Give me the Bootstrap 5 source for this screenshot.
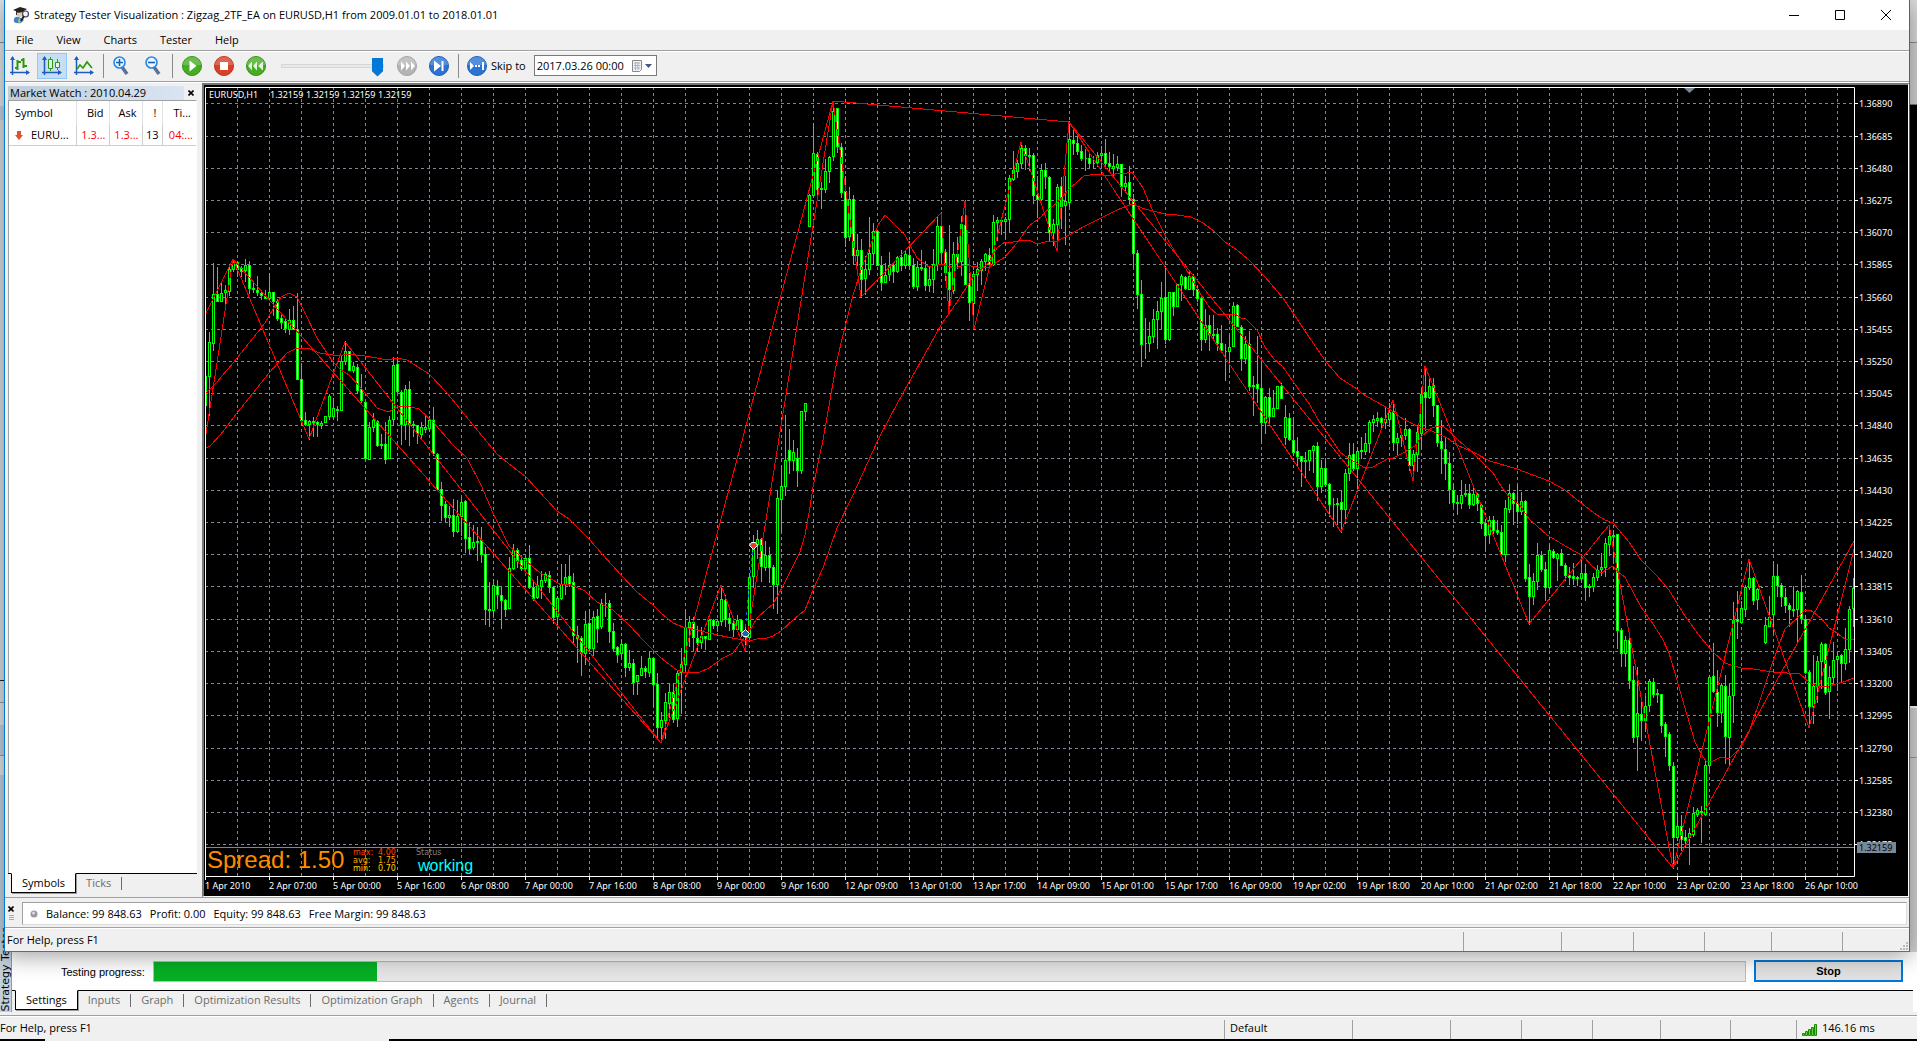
<!DOCTYPE html>
<html lang="en">
<head>
<meta charset="utf-8">
<meta name="viewport" content="width=device-width, initial-scale=1">
<title>Strategy Tester Visualization</title>
<link href="https://cdn.jsdelivr.net/npm/bootstrap@5.3.0/dist/css/bootstrap.min.css" rel="stylesheet">
<script src="https://cdn.jsdelivr.net/npm/bootstrap@5.3.0/dist/js/bootstrap.bundle.min.js"></script>
<style>
:root{--face:#f0f0f0;--edge:#a0a0a0;--accent:#0078d7;--slate:#778899}
body{font-family:"Open Sans","Noto Sans",sans-serif;font-size:11px;line-height:16px;color:#000;background:var(--face);height:100vh;overflow:hidden}
button,input{font:inherit;color:inherit}
.ui-btn{border:0;background:none;padding:0;display:flex;align-items:center;justify-content:center}
/* desktop row: slivers of the parent window on both sides */
.desk,.fill-col{min-height:0}
.side-l{width:4px;background:linear-gradient(#e3e3e3 0 42px,#8c8c8c 42px 43px,#e3e3e3 43px 106px,#c3d0dd 106px 120px,#dcdcdc 120px 680px,#222 680px 681px,#dcdcdc 681px 702px,#999 702px 703px,#e3e3e3 703px 725px,#c3d0dd 725px 755px,#999 755px 756px,#e3e3e3 756px 775px,#c3d0dd 775px)}
.side-r{width:7px;background:linear-gradient(#dcdcdc 0 42px,#8c8c8c 42px 43px,#d2d2d2 43px 104px,#777 104px 105px,#000 105px 706px,#fff 706px 708px,#d2d2d2 708px 757px,#999 757px 758px,#d2d2d2 758px)}
.win{min-width:0;background:var(--face);border-left:1px solid var(--accent);border-right:1px solid var(--accent);border-bottom:1px solid #1a7fd0;box-shadow:0 4px 22px rgba(0,0,0,.38);z-index:2}
.title-bar{height:30px;background:#fff;padding-left:7px}
.cap-btn{width:46px;height:29px}
.menu-bar{height:22px;border-bottom:1px solid #fff;box-shadow:inset 0 -1px var(--edge);padding:0 5px 2px 4px}
.menu-bar a{color:#000;text-decoration:none;padding:0 11px 0 7px;margin-right:5px}
.tool-bar{height:31px;border-bottom:1px solid #fff;box-shadow:inset 0 -1px var(--edge);padding-bottom:3px}
.tool{width:30px;height:26px;margin-right:2px}
.tool.on{background:#c5def4;border:1px solid #90c8f6}
.vsep{width:1px;height:24px;background:#8a8a8a}
.vsep.tight{margin:0 2px 0 4px}
.speed{appearance:none;width:103px;height:20px;background:none;margin:0 8px 0 10px}
.speed::-webkit-slider-runnable-track{height:4px;background:#e7eaea;border:1px solid #d6d6d6}
.speed::-webkit-slider-thumb{appearance:none;width:11px;height:19px;margin-top:-7px;background:var(--accent);clip-path:polygon(0 0,100% 0,100% 72%,50% 100%,0 72%)}
.date-box{width:123px;height:21px;background:#fff;border:1px solid #7a7a7a}
.date-box input{width:93px;border:0;padding:0 0 0 2px;outline:0;background:none}
.watch{width:197px;padding:3px 5px 2px 3px}
.watch-title{height:14px;padding-right:3px}
.watch-title span{background:linear-gradient(90deg,#bfcddb,#d9e5f3);width:176px;height:14px;line-height:14px;padding-left:2px}
.watch-body{background:#fff;border-left:1px solid var(--edge);border-top:1px solid var(--edge);border-right:1px solid #fff}
.quotes{width:100%;table-layout:fixed;border-collapse:collapse}
.quotes th{font-weight:400;height:24px;border-right:1px solid #e2e2e2;padding:0 5px 0 6px}
.quotes td{height:20px;border-right:1px solid #cfcfcf;border-bottom:1px solid #cfcfcf;padding:0 3px 0 2px;white-space:nowrap}
.quotes .down{color:#f00}
.quotes tr>:last-child{border-right:0}
.tab-strip{border-top:1px solid #000;height:22px;background:var(--face);color:#6d6d6d;padding-left:3px}
.tab-strip button{height:19px;padding:0 10px;color:#6d6d6d;margin-top:-1px}
.tab-strip .vbar{width:1px;height:13px;background:#6d6d6d;margin-top:3px}
.tab-strip .current{background:#fff;color:#000;border:1px solid #000;border-top:1px solid #fff;height:20px;box-shadow:1px 1px #999}
.chart-frame{min-width:0;background:#000;border-left:2px solid #777;border-top:2px solid #777;border-right:1px solid #fff;border-bottom:1px solid #fff}
.chart-frame svg{display:block}
.axis{font:9px "Noto Sans",sans-serif;fill:#fff}
.account{height:30px;border-top:1px solid var(--edge);padding:4px 2px 2px 3px}
.account-box{background:#fff;border:1px solid #dcdcdc;border-top:1px solid var(--edge);border-left:1px solid var(--edge);padding-left:7px}
.status-a{height:24px;border-top:1px solid var(--edge);box-shadow:inset 0 1px #fff;padding:4px 0 0 2px}
.status-b{height:24px;border-top:1px solid var(--edge);box-shadow:inset 0 1px #fff;padding-top:4px;margin-top:3px}
.cell{border-left:1px solid var(--edge);height:19px;padding-left:5px}
.tester{background:#fff;z-index:1}
.tester-name{width:12px;background:#c3d0dd;border-right:1px solid #999;line-height:12px}
.tester-name span{writing-mode:vertical-rl;transform:rotate(180deg);white-space:nowrap;font-family:"DejaVu Sans",sans-serif}
.test-row{height:38px;padding:8px 14px 0 49px;font-family:"Liberation Sans",sans-serif}
.test-row label{margin-right:8px}
.test-bar{height:21px;border-radius:0;background:#e6e6e6;border:1px solid #bcbcbc;margin-top:1px}
.test-bar .progress-bar{background:#06b025}
.stop-btn{width:149px;height:22px;border:2px solid var(--accent);background:#e1e1e1;font-weight:700;margin-left:8px;line-height:16px}
.tester-tabs{margin-right:4px}
.task-edge{height:2px;background:linear-gradient(90deg,#000 45px,#f0f0f0 45px 389px,#000 389px)}
</style>
</head>
<body class="d-flex flex-column">
<div class="desk d-flex flex-grow-1">
  <div class="side-l flex-shrink-0"></div>
  <main class="win flex-grow-1 d-flex flex-column">
    <header class="title-bar d-flex align-items-center">
      <svg width="18" height="18" viewBox="0 0 18 18"><path d="M1 4 8 1l7 2-6 4z" fill="#222"/><path d="M4 6v3l4 1 4-2V5L9 7z" fill="#333"/><circle cx="8" cy="8" r="3" fill="#f0c9a0"/><path d="M4 6q4 2 8-1l-1-1H4z" fill="#222"/><path d="M2 16q-1-6 5-5l5 3-3 3q-4 1-7-1z" fill="#2f86d8"/><path d="M7 11l2 5-3 1z" fill="#f2b531"/><circle cx="13.500" cy="8" r="3" fill="#eaf5ff" stroke="#445" stroke-width="1.200"/><path d="M12 10 9 15" stroke="#222" stroke-width="2"/></svg>
      <span class="ms-1 flex-grow-1">Strategy Tester Visualization : Zigzag_2TF_EA on EURUSD,H1 from 2009.01.01 to 2018.01.01</span>
      <button class="ui-btn cap-btn" aria-label="Minimize"><svg width="10" height="10"><path d="M0 5.500h10" stroke="#000"/></svg></button>
      <button class="ui-btn cap-btn" aria-label="Maximize"><svg width="10" height="10"><path d="M.5.5h9v9h-9z" fill="none" stroke="#000"/></svg></button>
      <button class="ui-btn cap-btn" aria-label="Close"><svg width="10" height="10"><path d="M0 0l10 10M10 0 0 10" stroke="#000"/></svg></button>
    </header>
    <nav class="menu-bar d-flex align-items-center">
      <a href="#">File</a><a href="#">View</a><a href="#">Charts</a><a href="#">Tester</a><a href="#">Help</a>
    </nav>
    <div class="tool-bar d-flex align-items-center">
      <button class="ui-btn tool" aria-label="Bar chart"><svg width="20" height="20"><path d="M2.500 1v18M0 16.500h19" stroke="#1c5bc0" stroke-width="1.500" fill="none"/><path d="M2.500 0 0 4h5zM20 16.500l-4-2.500v5z" fill="#1c5bc0"/><path d="M7.500 4v10M5 12h2M8 6h3M13.500 2v10M11 4h2M14 10h3" stroke="#2c9a10" stroke-width="2"/></svg></button>
      <button class="ui-btn tool on" aria-label="Candlesticks"><svg width="20" height="20"><path d="M2.500 1v18M0 16.500h19" stroke="#1c5bc0" stroke-width="1.500" fill="none"/><path d="M2.500 0 0 4h5zM20 16.500l-4-2.500v5z" fill="#1c5bc0"/><path d="M8.500 1v14M15.500 3v11" stroke="#2c9a10"/><path d="M6.500 3.500h4v9h-4zM13.500 6.500h4v5h-4z" fill="#e8f8e0" stroke="#2c9a10"/></svg></button>
      <button class="ui-btn tool me-0" aria-label="Line chart"><svg width="20" height="20"><path d="M2.500 1v18M0 16.500h19" stroke="#1c5bc0" stroke-width="1.500" fill="none"/><path d="M2.500 0 0 4h5zM20 16.500l-4-2.500v5z" fill="#1c5bc0"/><path d="M3 13l3-4 3 3 4-6 5 6" stroke="#2c9a10" stroke-width="1.700" fill="none"/></svg></button>
      <i class="vsep tight"></i>
      <button class="ui-btn tool" aria-label="Zoom in"><svg width="18" height="20"><path d="m10 11 5 7" stroke="#5b7291" stroke-width="3.500"/><circle cx="7.500" cy="6.500" r="5.500" fill="#eaf6ff" stroke="#2b86e0" stroke-width="1.600"/><path d="M4 6.500h7M7.500 3v7" stroke="#1560b8" stroke-width="1.600"/></svg></button>
      <button class="ui-btn tool me-0" aria-label="Zoom out"><svg width="18" height="20"><path d="m10 11 5 7" stroke="#5b7291" stroke-width="3.500"/><circle cx="7.500" cy="6.500" r="5.500" fill="#eaf6ff" stroke="#2b86e0" stroke-width="1.600"/><path d="M4 6.500h7" stroke="#1560b8" stroke-width="1.600"/></svg></button>
      <i class="vsep mx-1"></i>
      <button class="ui-btn tool" aria-label="Play"><svg width="20" height="20"><circle cx="10" cy="10" r="9.500" fill="#46ad22" stroke="#37921a"/><path d="M1 9a9 8 0 0 1 18 0z" fill="#fff" opacity=".2"/><path d="m7.500 4.500 7 5.500-7 5.500z" fill="#fff"/></svg></button>
      <button class="ui-btn tool" aria-label="Stop"><svg width="20" height="20"><circle cx="10" cy="10" r="9.500" fill="#d9402a" stroke="#bb3320"/><path d="M1 9a9 8 0 0 1 18 0z" fill="#fff" opacity=".2"/><path d="M6 6h8v8H6z" fill="#fff"/></svg></button>
      <button class="ui-btn tool me-0" aria-label="Slower"><svg width="20" height="20"><circle cx="10" cy="10" r="9.500" fill="#46ad22" stroke="#37921a"/><path d="M1 9a9 8 0 0 1 18 0z" fill="#fff" opacity=".2"/><path d="M6 5.500v9L2 10zM11 5.500v9L7 10zM17 5.500v9L12 10z" fill="#fff" opacity=".85"/></svg></button>
      <input class="speed" type="range" min="0" max="10" value="10" aria-label="Speed">
      <button class="ui-btn tool" aria-label="Faster"><svg width="20" height="20"><circle cx="10" cy="10" r="9.500" fill="#b4b4b4" stroke="#a2a2a2"/><path d="M1 9a9 8 0 0 1 18 0z" fill="#fff" opacity=".2"/><path d="M4 5.500v9L8 10zM9 5.500v9l4-4.500zM14 5.500v9l4-4.500z" fill="#fff"/></svg></button>
      <button class="ui-btn tool me-1" aria-label="Step"><svg width="20" height="20"><circle cx="10" cy="10" r="9.500" fill="#2a72d4" stroke="#1f5fb8"/><path d="M1 9a9 8 0 0 1 18 0z" fill="#fff" opacity=".2"/><path d="m5 4.500 7 5.500-7 5.500zM12.500 5h2v10h-2z" fill="#fff"/></svg></button>
      <i class="vsep"></i>
      <button class="ui-btn ms-2" aria-label="Skip"><svg width="20" height="20"><circle cx="10" cy="10" r="9.500" fill="#2a72d4" stroke="#1f5fb8"/><path d="M1 9a9 8 0 0 1 18 0z" fill="#fff" opacity=".2"/><path d="M3 6v8l4-4zM8 9h2v2H8zM11 9h2v2h-2zM15 6h2v8h-2z" fill="#fff"/></svg></button>
      <label class="ms-1 me-2" for="skipDate">Skip to</label>
      <div class="date-box d-flex align-items-center">
        <input id="skipDate" type="text" value="2017.03.26 00:00">
        <button class="ui-btn" aria-label="Pick date"><svg width="24" height="14"><path d="M4.500 1.500h9v9l-2 2h-7z" fill="#eef2f6" stroke="#888"/><path d="M6 4h6M6 6.500h6M6 9h6M7.500 3v8M10 3v8" stroke="#a9b4c4"/><path d="M17 5h7l-3.500 4z" fill="#3c5a85"/></svg></button>
      </div>
    </div>
    <div class="fill-col d-flex flex-grow-1">
      <aside class="watch flex-shrink-0 d-flex flex-column">
        <div class="watch-title d-flex align-items-center justify-content-between">
          <span>Market Watch : 2010.04.29</span>
          <button class="ui-btn" aria-label="Close panel"><svg width="6" height="6"><path d="m.5.5 5 5m0-5-5 5" stroke="#000" stroke-width="1.600"/></svg></button>
        </div>
        <div class="watch-body flex-grow-1">
          <table class="quotes">
            <colgroup><col style="width:67px"><col style="width:33px"><col style="width:33px"><col style="width:20px"><col></colgroup>
            <thead><tr><th>Symbol</th><th class="text-end">Bid</th><th class="text-end">Ask</th><th class="text-end">!</th><th class="text-end">Ti...</th></tr></thead>
            <tbody><tr><td><svg class="ms-1 me-2" width="8" height="9"><path d="M2 0h4v4h2L4 9 0 4h2z" fill="#e0522c"/></svg>EURU...</td><td class="down text-end">1.3...</td><td class="down text-end">1.3...</td><td class="text-end">13</td><td class="down text-end">04:...</td></tr></tbody>
          </table>
        </div>
        <div class="tab-strip d-flex">
          <button class="ui-btn current">Symbols</button><button class="ui-btn">Ticks</button><i class="vbar"></i>
        </div>
      </aside>
      <section class="chart-frame flex-grow-1" id="frame"></section>
    </div>
    <div class="account d-flex">
      <div class="d-flex flex-column align-items-center pt-1 me-2">
        <svg width="6" height="14"><path d="m.5.5 5 5m0-5-5 5" stroke="#000" stroke-width="1.600"/><path d="M1 9.500h5M1 11.500h5M1 13.500h5" stroke="#aaa"/></svg>
      </div>
      <div class="account-box flex-grow-1 d-flex align-items-center">
        <svg class="me-2" width="8" height="8"><circle cx="4" cy="4" r="3.500" fill="#9a9a9a"/><circle cx="3.500" cy="3" r="1.500" fill="#ddd"/></svg>
        <span class="me-2">Balance: 99 848.63</span><span class="me-2">Profit: 0.00</span><span class="me-2">Equity: 99 848.63</span><span>Free Margin: 99 848.63</span>
      </div>
    </div>
    <footer class="status-a d-flex">
      <span class="flex-grow-1">For Help, press F1</span>
      <span class="cell" style="width:98px"></span><span class="cell" style="width:72px"></span><span class="cell" style="width:71px"></span><span class="cell" style="width:67px"></span><span class="cell" style="width:71px"></span>
      <span class="cell d-flex align-items-end justify-content-end" style="width:67px"><svg width="9" height="9"><path d="M6 0h2v2H6zM3 3h2v2H3zM6 3h2v2H6zM0 6h2v2H0zM3 6h2v2H3zM6 6h2v2H6z" fill="#bbb"/></svg></span>
    </footer>
  </main>
  <div class="side-r flex-shrink-0"></div>
</div>
<section class="tester d-flex">
  <div class="tester-name flex-shrink-0 position-relative"><span class="position-absolute bottom-0 start-0">Strategy Tester</span></div>
  <div class="flex-grow-1">
    <div class="test-row d-flex">
      <label class="pt-1" for="stopBtn">Testing progress:</label>
      <div class="progress test-bar flex-grow-1" role="progressbar" aria-label="Testing progress"><div class="progress-bar" style="width:14%"></div></div>
      <button class="stop-btn" id="stopBtn">Stop</button>
    </div>
    <div class="tab-strip tester-tabs d-flex">
      <button class="ui-btn current">Settings</button><button class="ui-btn">Inputs</button><i class="vbar"></i><button class="ui-btn">Graph</button><i class="vbar"></i><button class="ui-btn">Optimization Results</button><i class="vbar"></i><button class="ui-btn">Optimization Graph</button><i class="vbar"></i><button class="ui-btn">Agents</button><i class="vbar"></i><button class="ui-btn">Journal</button><i class="vbar"></i>
    </div>
  </div>
</section>
<footer class="status-b d-flex">
  <span class="flex-grow-1">For Help, press F1</span>
  <span class="cell" style="width:128px">Default</span><span class="cell" style="width:98px"></span><span class="cell" style="width:71px"></span><span class="cell" style="width:71px"></span><span class="cell" style="width:68px"></span><span class="cell" style="width:70px"></span><span class="cell" style="width:66px"></span>
  <span class="cell d-flex" style="width:121px"><svg class="mt-1 me-1" width="16" height="12"><path d="M.5 9.500h2v2h-2zM3.500 7.500h2v4h-2zM6.500 5.500h2v6h-2zM9.500 3.500h2v8h-2zM12.500.5h2v11h-2z" fill="#5fd83a" stroke="#1c8a06"/></svg>146.16 ms</span>
</footer>
<div class="task-edge"></div>
<script>
// Candles in runs: first bar x, base y, then top,open,close,bottom in thirds of a pixel.
const runs = [
[205,230,`438,438,526,526 306,440,337,556 100,340,193,362 112,193,214,214 154,214,190,214 166,187,181,220 102,184,118,196 87,118,97,124 95,97,117,140 108,116,124,140 88,122,106,155 94,106,176,190 155,175,178,188 138,181,187,195 185,190,196,208 180,199,206,206 130,205,187,205 186,187,214,257 208,214,265,272 250,265,277,296 265,274,296,308 237,297,271,312 228,271,297,298 190,298,448,448 402,448,571,586 546,571,583,586 570,583,574,628 562,574,577,618 574,577,583,620 575,586,580,596 558,577,560,577 492,559,499,568 504,559,535,568 528,541,538,570 378,541,394,541 334,394,364,402 364,364,421,421 396,421,409,428 402,412,481,490 432,478,511,517 516,517,685,688 578,688,592,688 549,592,571,604 570,574,646,650 612,643,646,654 576,643,688,700 558,685,571,685 382,568,406,586 382,403,484,486 480,487,583,644 466,583,478,627 454,478,583,645 574,583,586,620 586,586,611,640 576,614,592,624 558,598,592,606 560,595,571,604 532,571,670,676 670,674,778,782 757,778,826,872 814,823,862,876 828,862,856,888 808,856,905,920 812,905,859,908 802,859,817,915 812,814,925,968 880,922,956,974 885,953,937,958 892,934,937,990 891,931,973,998 952,973,1138,1182 1057,1138,1141,1190 1048,1141,1066,1156 1052,1069,1093,1136 1072,1096,1111,1196 1108,1111,1138,1158 982,1135,1015,1135 942,1015,961,1018 956,961,991,1012 975,991,1015,1022 980,1015,985,1020 946,985,1072,1074 1052,1072,1105,1110 1040,1102,1066,1105 1024,1070,1051,1106 1028,1050,1033,1058 1024,1036,1072,1088 1070,1072,1162,1180 1098,1159,1105,1184 1002,1105,1063,1108 1003,1063,1042,1092 975,1039,1062,1070`],
[573,480,`280,307,466,490 438,466,475,548 468,475,520,585 393,520,433,552 388,430,505,520 394,505,412,526 388,409,445,486 357,439,370,446 339,370,370,408 360,370,454,486 430,454,505,514 500,502,523,548 480,520,493,532 490,493,562,588 510,562,550,570 538,550,607,644 586,604,586,642 528,586,565,587 560,565,574,592 514,577,535,590 532,535,613,680 580,613,742,774 697,742,721,788 640,721,667,776 610,670,637,712 610,637,718,726 574,715,580,740 504,577,553,700 390,553,442,578 408,442,427,498 412,427,472,510 438,475,487,514 442,487,469,506 468,469,475,507 418,478,421,478 418,421,436,444 418,436,424,454 315,424,358,436 345,361,418,438 400,415,430,452 418,430,448,468 405,448,421,450 418,421,454,470 432,454,472,512 280,472,292,474 165,289,196,322 150,193,178,234 176,178,260,304 184,262,226,272 202,226,262,306 256,262,313,384 30,313,55,399 -40,58,19,155 -195,19,-60,46 -153,-90,-60,-20 -120,-60,-84,-30 -96,-66,-30,20 -206,-30,-206,-20`],
[805,80,`970,994,970,1020 342,439,346,439 129,345,220,346 218,223,328,350 308,325,328,384 238,328,274,336 228,274,232,306 70,229,94,240 84,85,200,218 190,202,338,352 288,334,472,500 322,469,358,480 345,358,526,550 462,526,511,556 478,511,598,652 528,595,568,642 411,568,520,584 430,520,454,552 450,454,556,556 528,556,607,630 550,607,586,607 516,583,556,600 548,556,574,606 528,574,532,576 512,532,556,572 514,556,523,566 484,526,556,568 535,556,619,624 545,619,562,630 510,562,565,572 545,565,616,630 560,616,598,635 507,598,553,638 408,553,439,572 398,439,517,544 508,517,577,600 435,577,628,698 486,631,523,640 471,523,547,566 408,544,433,585 362,436,613,614 580,613,667,720 574,670,583,748 546,583,568,630 538,571,544,612 520,544,523,572 504,526,553,555 406,553,427,555 412,427,421,480 418,421,424,462 412,424,418,474 286,418,295,458 214,298,271,300 240,274,250,292 186,250,205,262 196,205,226,267 206,226,229,270 220,226,346,370 290,346,358,412 252,358,271,361 249,271,289,326 288,292,458,480 418,458,433,495 312,433,322,512 291,319,379,445 290,376,364,492 125,367,178,378 142,181,190,222 166,190,214,224 196,214,235,240 208,235,236,270 220,235,250,266 228,250,251,264 218,247,226,260 199,226,220,262 178,220,250,262 216,250,260,276 222,264,259,290 228,262,253,272 252,253,319,350 288,319,310,336 258,307,358,376 342,358,520,560 512,520,643,686 600,643,793,860 716,790,791,836 726,790,769,815 688,769,718,786 664,718,694,804 606,694,655,744 560,652,778,790 636,778,637,782 636,637,679,705 612,679,613,680`],
[1181,120,`464,493,469,540 468,472,505,508 450,508,469,508 462,469,508,526 500,508,535,545 532,535,658,692 567,658,616,668 585,616,643,692 586,643,646,655 625,643,670,690 616,670,692,695 672,693,694,780 645,694,682,756 546,679,559,680 552,556,619,620 616,622,715,752 650,715,673,730 633,673,799,812 768,796,799,885 648,793,805,846 728,805,907,970 828,907,832,940 804,832,889,908 810,889,865,890 798,865,799,866 790,799,835,836 856,952,892,974 880,895,958,960 892,961,997,1005 952,994,1009,1040 1008,1009,1024,1100 996,1021,1024,1076 990,1021,991,1052 976,991,979,1058 966,979,1099,1140 1020,1099,1045,1116 1014,1045,1093,1098 1090,1093,1153,1190 1136,1153,1154,1220 1136,1150,1153,1212 1110,1147,1168,1236 1048,1168,1060,1210 970,1060,1006,1080 970,1003,1045,1050 982,1045,994,1104 952,991,994,1015 940,994,970,1002 902,970,907,998 885,907,898,935 876,901,895,918 892,895,907,926 866,907,898,926 850,898,877,920 840,874,967,990 940,967,955,1006 938,952,946,980 895,946,928,957 925,928,1036,1050 990,1036,1003,1082 918,1003,937,1055 808,940,823,985 738,817,832,930 778,832,799,836 776,796,856,888 855,856,967,980 900,964,985,1060 956,988,1030,1078 996,1030,1108,1150 1092,1111,1147,1158 1126,1147,1150,1182 1080,1150,1126,1166 1092,1120,1123,1128 1092,1120,1153,1166 1100,1153,1123,1156 1120,1123,1150,1172 1152,1156,1210,1226`],
[1485,460,`180,190,226,272 168,224,181,250 168,181,211,220 180,211,217,222 195,217,283,290 120,283,145,305 72,148,100,158 98,100,130,194 76,130,154,190 96,154,124,164 122,124,355,365 314,352,409,492 340,409,364,434 250,364,286,388 274,286,328,334 306,328,382,422 254,382,271,395 268,274,292,294 280,295,283,362 268,280,316,316 310,316,346,360 322,346,352,372 310,350,354,374 348,352,355,376 300,355,340,366 312,340,382,420 372,379,382,408 340,379,352,394 315,352,331,360 280,328,322,345 234,322,250,350 196,252,229,285 210,226,229,310 222,223,511,565 504,511,580,620 528,580,541,620 530,541,661,686 620,661,832,848 622,829,760,930 722,763,781,840 710,781,739,815 658,736,664,755 656,667,703,712 688,700,703,728 702,703,796,818 786,793,829,890 816,823,916,932 906,919,1132,1225 1060,1132,1099,1140 1066,1099,1138,1172 1110,1132,1141,1160 1104,1132,1120,1212 1042,1123,1060,1128 1046,1063,1051,1068 1038,1054,1056,1148 900,1063,916,1066 646,916,652,935 550,649,694,696 630,697,757,800 670,757,676,786 645,679,829,910 670,832,709,912 428,706,481,788 394,478,484,534 424,487,445,488 376,448,382,468 300,382,355,388 352,355,421,434 384,418,388,448 382,382,383,383 472,547,496,550 408,499,472,500 304,463,349,516 312,349,376,410 370,376,409,440 385,412,436,458 430,436,448,498 380,448,450,468 391,448,394,548 345,397,475,490 466,478,637,640 630,637,739,800 586,739,679,790 588,679,604,728 546,604,553,684 550,553,697,704 620,694,652,776 546,652,601,668 576,598,589,690 584,586,610,668 504,610,568,628 438,568,448,608 355,445,385,500`]];
// Indicator polylines: pieces of [origin x, origin y, points in thirds of a pixel].
const A=[200,230],B=[540,480],C=[780,80],D=[1120,120],E=[1480,460];
const lines = [
[[A,'18,612 100,88 328,628 436,335'],[B,'364,790 544,315 616,512'],[C,'160,62 244,652 484,398 508,698 556,362 582,748 724,186 832,512 868,125'],[D,'664,1236 820,840 880,1082 916,738'],[E,'148,492 388,196 580,1225 808,298 988,803 1121,268']],
[[A,'18,250 100,88'],[B,'364,790'],[C,'160,62 868,125'],[E,'580,1225 1121,244']],
[[A,'18,490 50,455 100,400 148,338 196,278 220,238 244,200 266,190 290,200 316,250 352,325 400,395 424,420 448,436 484,475 532,533 568,545 592,530 620,527 656,538 700,575 760,645 800,684 844,765 880,850 928,948 976,990 1019,1030'],[B,'24,290 64,316 88,311 136,334 172,366 220,390 268,434 316,485 364,534 412,570 436,580 480,576 508,565 550,533 580,518 604,487 628,455 652,415 680,387 700,372 730,318 780,215 796,165 810,80 820,20'],[C,'128,1080 150,960 172,840 196,740 220,645 244,570 270,500 295,435 316,406 345,435 376,465 388,490 412,535 448,560 484,553 525,563 556,555 592,562 628,562 676,530 712,490 748,437 784,410 796,395 832,370 868,328 912,288 950,283 990,287 1010,278 1040,278'],[D,'36,157 70,205 96,268 136,345 172,405 208,462 244,525 270,565 292,583 316,586 344,583 364,595 378,596 410,630 436,680 460,715 490,740 530,800 570,855 592,893 630,950 660,995 676,1008 736,1045 760,1040 808,1015 820,1015 850,1000 884,978 904,952 930,928 952,919 970,919 990,935 1010,958 1060,998 1090,1030'],[E,'40,40 64,78 88,110 120,135 148,178 172,198 200,225 260,262 310,288 340,320 364,338 400,318 412,333 436,350 460,395 484,440 520,493 545,535 568,580 592,660 620,765 645,845 668,890 680,905 700,902 724,892 748,897 784,862 808,815 844,710 868,640 892,570 916,508 950,475 976,450 990,450 1024,473 1048,505 1072,520 1096,538 1121,540']],
[[A,'18,653 30,648 64,612 112,548 160,490 208,428 260,370 290,355 320,355 360,370 416,378 440,373 496,377 530,385 560,391 592,385 622,390 688,432 740,490 820,585 890,672 940,712 976,738'],[B,'52,93 88,118 148,178 190,225 244,284 292,337 340,374 364,400 400,430 430,442 460,446 508,458 560,472 628,484 652,476 680,475 700,468 724,452 760,420 796,390 820,330 850,265 892,145 940,45'],[C,'295,1080 330,1010 370,938 436,823 484,735 532,665 580,590 628,545 652,505 676,487 700,487 730,481 752,482 772,491 796,486 832,482 868,465 916,438 976,408 1010,390 1056,373'],[D,'76,267 136,283 172,286 212,290 250,310 285,335 316,367 352,390 388,420 436,470 490,533 520,580 568,650 620,728 660,775 712,808 724,820 808,868 850,898 904,925 930,930 980,955 1010,975 1060,997'],[E,'30,3 112,26 160,45 208,62 256,90 304,128 352,165 376,180 400,188 448,245 484,300 532,348 568,390 616,468 664,535 700,575 736,608 784,625 820,626 880,636 960,643 990,670 1012,677 1048,679 1090,665 1121,655']]];
const times='1 Apr 2010|2 Apr 07:00|5 Apr 00:00|5 Apr 16:00|6 Apr 08:00|7 Apr 00:00|7 Apr 16:00|8 Apr 08:00|9 Apr 00:00|9 Apr 16:00|12 Apr 09:00|13 Apr 01:00|13 Apr 17:00|14 Apr 09:00|15 Apr 01:00|15 Apr 17:00|16 Apr 09:00|19 Apr 02:00|19 Apr 18:00|20 Apr 10:00|21 Apr 02:00|21 Apr 18:00|22 Apr 10:00|23 Apr 02:00|23 Apr 18:00|26 Apr 10:00'.split('|');
function draw(){
  const f=document.getElementById('frame');f.innerHTML='';
  const W=f.clientWidth,H=f.clientHeight,L=205,T=87,R=204+W-54,Bt=85+H-20;
  let grid='',labels='',wick='',hollow='',solid='',red='';
  for(let x=L+32;x<R;x+=32)grid+=`M${x}.5 ${T}V${Bt}`;
  for(let k=0;k<24;k++){const y=Math.round(103.3+32.21*k);grid+=`M${L} ${y}.5H${R}`;
    labels+=`<path d="M${R} ${y}.5h4" stroke="#fff"/><text class="axis" x="${R+5}" y="${y+4}">${(1.3689-.00205*k).toFixed(5)}</text>`}
  times.forEach((t,i)=>{const x=L+64*i;labels+=`<path d="M${x}.5 ${Bt}v4" stroke="#fff"/><text class="axis" x="${x}" y="${Bt+13}">${t}</text>`});
  for(const [x0,y0,s] of runs)s.split(' ').forEach((c,i)=>{
    const [t,o,e,b]=c.split(',').map(v=>Math.floor(y0+v/3)),x=x0+4*i,a=Math.min(o,e),z=Math.max(o,e);
    if(a>t)wick+=`M${x}.5 ${t}V${a}`;
    if(b>z)wick+=`M${x}.5 ${z}V${b+1}`;
    const r=`M${x-1+.5} ${a}.5h2v${z-a}h-2z`;
    if(e>o)solid+=r;else hollow+=r;});
  for(const l of lines)red+=`<polyline points="${l.map(([o,s])=>s.split(' ').map(p=>{const [x,y]=p.split(',');return Math.round(o[0]+x/3)+','+Math.round(o[1]+y/3)}).join(' ')).join(' ')}"/>`;
  const quote=[270,306,342,378].map(x=>`<text class="axis" x="${x}" y="98">1.32159</text>`).join('');
  f.innerHTML=`<svg width="${W}" height="${H}" viewBox="204 85 ${W} ${H}" role="img" aria-label="EURUSD H1 candlestick chart">
<clipPath id="plot"><rect x="${L}" y="${T}" width="${R-L}" height="${Bt-T}"/></clipPath>
<path d="${grid}" stroke="#778899" stroke-dasharray="3 3" shape-rendering="crispEdges"/>
<path d="M${L} 847.5H${R}" stroke="#778899"/>
<g clip-path="url(#plot)" shape-rendering="crispEdges"><path d="${wick}" stroke="#0f0"/><path d="${hollow}" stroke="#0f0" fill="#000"/><path d="${solid}" stroke="#0f0" fill="#fff"/>
<g fill="none" stroke="#f00">${red}</g><path d="M745 633 753 545" stroke="#1565c8" stroke-dasharray="3 3"/></g>
<path d="M${L}.5 ${T}.5H${R}.5V${Bt}.5H${L}.5z" fill="none" stroke="#fff"/>
<path d="M1684 88h11l-5.500 5z" fill="#778899"/>
<path d="M753.500 549.500l-4-4 2-3h4l2 3z" fill="#e8401c" stroke="#fff"/><path d="M745.500 629.500l4 4-2 3h-4l-2-3z" fill="#1565b8" stroke="#fff"/>
${labels}
<rect x="${R+3}" y="842" width="39" height="11" fill="#778899"/><text class="axis" style="fill:#000" x="${R+5}" y="851">1.32159</text>
<text class="axis" x="209" y="98">EURUSD,H1</text>${quote}
<g font-family="Liberation Sans,sans-serif"><text x="207" y="868" font-size="24" fill="#ff8c00">Spread: 1.50</text><text x="418" y="871" font-size="16" fill="#0ff">working</text></g>
<g font-family="DejaVu Sans,sans-serif" font-size="8"><text x="353" y="855" fill="#ff4500">max:</text><text x="378" y="855" fill="#ff4500">4.00</text><text x="353" y="863" fill="#ffa500">avg:</text><text x="378" y="863" fill="#ffa500">1.75</text><text x="353" y="871" fill="#ffd700">min:</text><text x="378" y="871" fill="#ffd700">0.70</text><text x="416" y="855" fill="#808080">Status</text></g></svg>`;
}
draw();addEventListener('resize',draw);
</script>
</body>
</html>
